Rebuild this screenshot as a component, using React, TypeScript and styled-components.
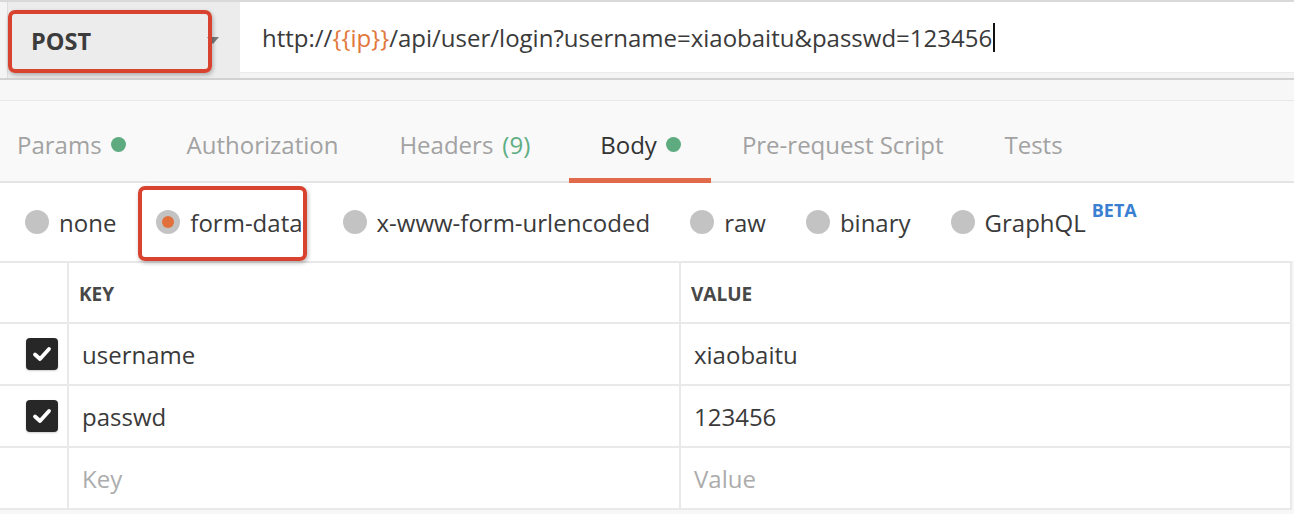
import React from "react";
import styled, { createGlobalStyle } from "styled-components";

const Global = createGlobalStyle`
  html, body { margin: 0; padding: 0; background: #ffffff; }
  body { font-family: "Open Sans", "Noto Sans", Arial, sans-serif; color: #333; }
  * { box-sizing: border-box; }
`;

const Page = styled.div`
  width: 1294px;
  height: 514px;
  overflow: hidden;
  background: #f7f7f7;
`;

const RequestBar = styled.div`
  display: flex;
  height: 80px;
  border-top: 2px solid #d9d9d9;
  border-bottom: 2px solid #d2d2d2;
  background: #f4f4f4;
  padding-left: 7px;
`;

const MethodSelect = styled.div`
  position: relative;
  width: 233px;
  display: flex;
  align-items: center;
  background: #ececec;
  border-left: 1px solid #dedede;
  padding-left: 23px;
`;

const MethodLabel = styled.span`
  font-size: 23.5px;
  font-weight: 700;
  color: #3c3c3c;
  margin-top: 2px;
`;

const Caret = styled.span`
  position: absolute;
  left: 199px;
  top: 35px;
  width: 0;
  height: 0;
  border-left: 6px solid transparent;
  border-right: 6px solid transparent;
  border-top: 7px solid #7a7a7a;
`;

const Highlight = styled.div<{ $l: number; $t: number; $w: number; $h: number }>`
  position: absolute;
  left: ${(p) => p.$l}px;
  top: ${(p) => p.$t}px;
  width: ${(p) => p.$w}px;
  height: ${(p) => p.$h}px;
  border: 4px solid #d8432f;
  border-radius: 7px;
  box-shadow: 1px 2px 4px rgba(0, 0, 0, 0.28);
  pointer-events: none;
`;

const UrlField = styled.div`
  flex: 1;
  display: flex;
  align-items: center;
  background: #ffffff;
  margin-bottom: 5px;
  border-bottom: 1px solid #ececec;
  padding-left: 22px;
  font-size: 24px;
  color: #3a3a3a;
  white-space: nowrap;
`;

const Var = styled.span`
  color: #e2773c;
`;

const Cursor = styled.span`
  display: inline-block;
  width: 2px;
  height: 29px;
  background: #111;
  margin-left: 1px;
`;

const Spacer = styled.div`
  height: 21px;
  background: #f7f7f7;
  border-bottom: 1px solid #e8e8e8;
`;

const TabBar = styled.div`
  display: flex;
  height: 82px;
  background: #f9f9f9;
  border-bottom: 2px solid #e4e4e4;
`;

const Tab = styled.div<{ $active?: boolean; $first?: boolean; $extra?: number }>`
  display: flex;
  align-items: center;
  gap: 9px;
  padding: 10px ${(p) => 30 + (p.$extra ?? 0)}px 0 ${(p) => (p.$first ? 17 : 31)}px;
  font-size: 24px;
  color: ${(p) => (p.$active ? "#333" : "#a2a2a2")};
  border-bottom: 5px solid ${(p) => (p.$active ? "#e06a4a" : "transparent")};
  margin-bottom: -2px;
  white-space: nowrap;
`;

const Count = styled.span`
  color: #5fae83;
  margin-left: 9px;
`;

const Dot = styled.span`
  display: inline-block;
  width: 15px;
  height: 15px;
  border-radius: 50%;
  background: #5eab80;
`;

const BodyTypes = styled.div`
  position: relative;
  display: flex;
  align-items: center;
  height: 78px;
  background: #ffffff;
  padding-left: 25px;
`;

const RadioOption = styled.div`
  display: flex;
  align-items: center;
  margin-right: 40px;
  font-size: 24px;
  color: #3a3a3a;
  white-space: nowrap;
`;

const RadioCircle = styled.span<{ $on?: boolean }>`
  position: relative;
  display: inline-block;
  width: 24px;
  height: 24px;
  border-radius: 50%;
  background: #c3c3c3;
  margin-right: 10px;
  &::after {
    content: "";
    display: ${(p) => (p.$on ? "block" : "none")};
    position: absolute;
    left: 6px;
    top: 6px;
    width: 12px;
    height: 12px;
    border-radius: 50%;
    background: #e2703c;
  }
`;

const Beta = styled.span`
  align-self: flex-start;
  font-size: 18px;
  font-weight: 700;
  color: #3a7fd2;
  margin-left: 6px;
  margin-top: -8px;
`;

const Table = styled.div`
  background: #ffffff;
  border-top: 2px solid #e8e8e8;
  width: 1292px;
`;

const Row = styled.div<{ $head?: boolean }>`
  display: grid;
  grid-template-columns: 69px 612px 611px;
  height: ${(p) => (p.$head ? 61 : 62)}px;
  border-bottom: 2px solid #e9e9e9;
`;

const Cell = styled.div<{ $pad?: number }>`
  display: flex;
  align-items: center;
  border-right: 2px solid #e9e9e9;
  padding-left: ${(p) => p.$pad ?? 13}px;
  font-size: 24px;
  color: #3a3a3a;
`;

const HeadCell = styled(Cell)`
  font-size: 19px;
  font-weight: 700;
  color: #484848;
  padding-left: 10px;
  padding-top: 2px;
`;

const Placeholder = styled.span`
  color: #acacac;
`;

const CheckBox = styled.span`
  display: inline-flex;
  align-items: center;
  justify-content: center;
  width: 32px;
  height: 32px;
  border-radius: 4px;
  background: #272727;
  box-shadow: 0 1px 2px rgba(0, 0, 0, 0.2);
`;

const Check = () => (
  <CheckBox>
    <svg width="22" height="22" viewBox="0 0 22 22">
      <path
        d="M4 11.5 L9 16 L18 6"
        fill="none"
        stroke="#ffffff"
        strokeWidth="3.8"
        strokeLinecap="round"
        strokeLinejoin="round"
      />
    </svg>
  </CheckBox>
);

const tabs = [
  { label: "Params", dot: true },
  { label: "Authorization" },
  { label: "Headers", count: "(9)", extra: 9 },
  { label: "Body", dot: true, active: true },
  { label: "Pre-request Script" },
  { label: "Tests" },
];

const bodyTypes = ["none", "form-data", "x-www-form-urlencoded", "raw", "binary", "GraphQL"];

const rows = [
  { key: "username", value: "xiaobaitu" },
  { key: "passwd", value: "123456" },
];

export default function App() {
  return (
    <>
      <Global />
      <Page>
        <RequestBar>
          <MethodSelect>
            <MethodLabel>POST</MethodLabel>
            <Caret />
            <Highlight $l={0} $t={8} $w={204} $h={63} />
          </MethodSelect>
          <UrlField>
            http://<Var>{"{{ip}}"}</Var>/api/user/login?username=xiaobaitu&amp;passwd=123456
            <Cursor />
          </UrlField>
        </RequestBar>
        <Spacer />
        <TabBar>
          {tabs.map((t, i) => (
            <Tab key={t.label} $active={t.active} $first={i === 0} $extra={t.extra}>
              <span>
                {t.label}
                {t.count && <Count>{t.count}</Count>}
              </span>
              {t.dot && <Dot />}
            </Tab>
          ))}
        </TabBar>
        <BodyTypes>
          {bodyTypes.map((b) => (
            <RadioOption key={b}>
              <RadioCircle $on={b === "form-data"} />
              {b}
              {b === "GraphQL" && <Beta>BETA</Beta>}
            </RadioOption>
          ))}
          <Highlight $l={138} $t={3} $w={169} $h={75} />
        </BodyTypes>
        <Table>
          <Row $head>
            <HeadCell />
            <HeadCell>KEY</HeadCell>
            <HeadCell>VALUE</HeadCell>
          </Row>
          {rows.map((r) => (
            <Row key={r.key}>
              <Cell $pad={26}>
                <Check />
              </Cell>
              <Cell>{r.key}</Cell>
              <Cell>{r.value}</Cell>
            </Row>
          ))}
          <Row>
            <Cell />
            <Cell>
              <Placeholder>Key</Placeholder>
            </Cell>
            <Cell>
              <Placeholder>Value</Placeholder>
            </Cell>
          </Row>
        </Table>
      </Page>
    </>
  );
}
